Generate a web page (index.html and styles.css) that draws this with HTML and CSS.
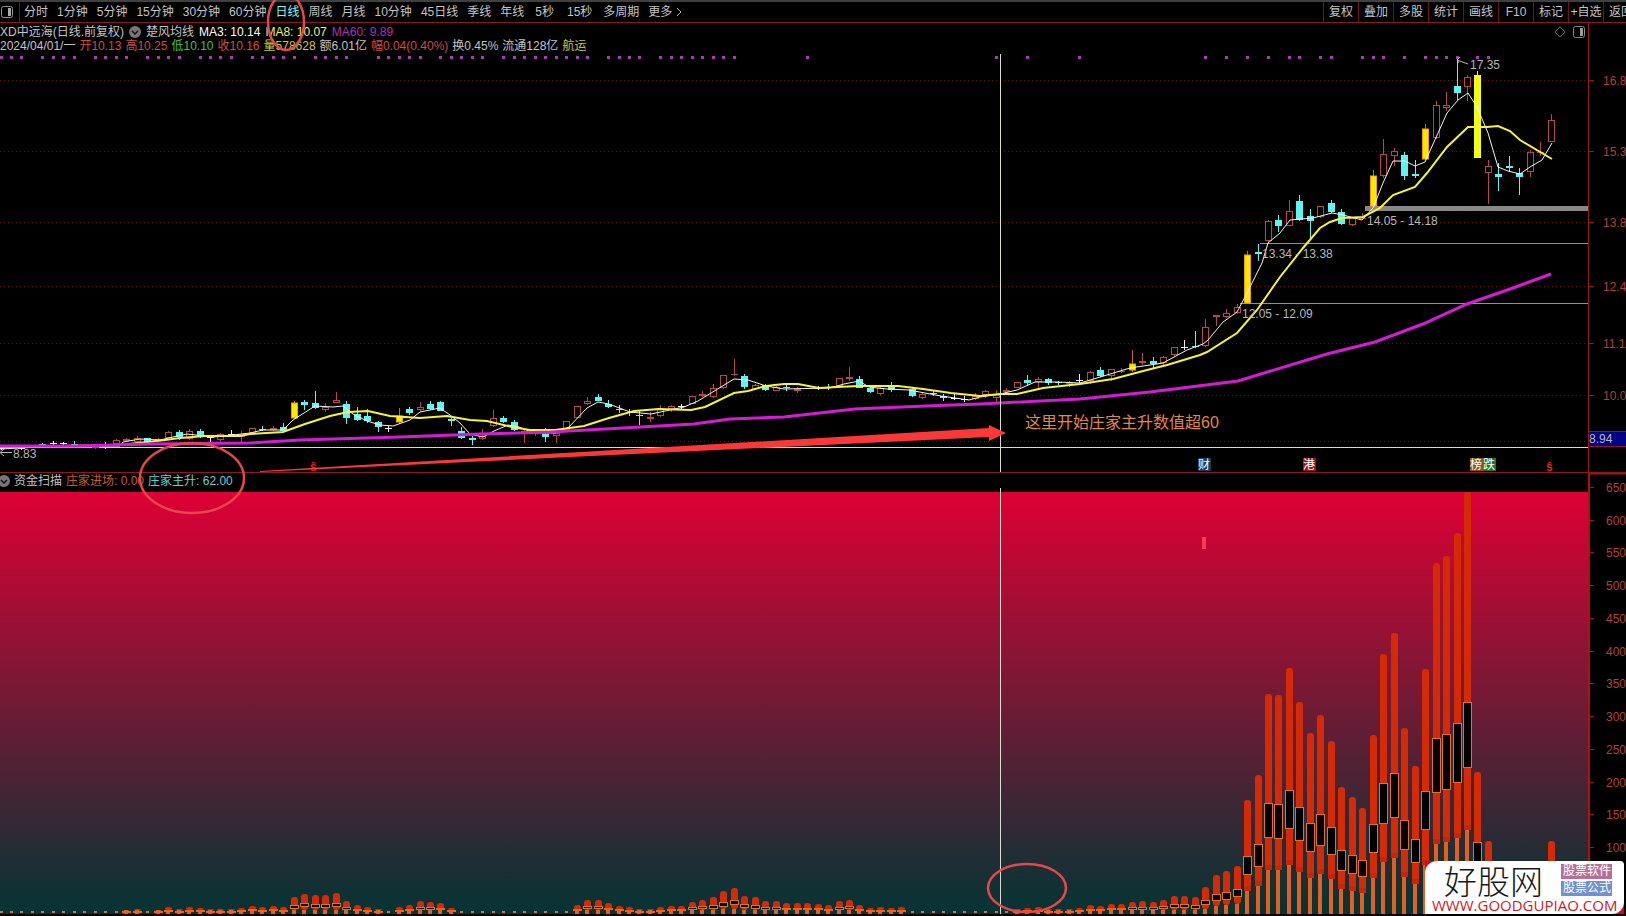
FILE: index.html
```html
<!DOCTYPE html>
<html lang="zh-CN">
<head>
<meta charset="utf-8">
<title>XD中远海 日线</title>
<link rel="stylesheet" href="styles.css">
</head>
<body>
<div class="terminal">
  <nav class="toolbar">
    <button class="panel-toggle" aria-label="侧栏">
      <svg width="12" height="12" viewBox="0 0 12 12"><rect x=".5" y=".5" width="11" height="11" rx="2" fill="none" stroke="#999"/><rect x="7" y="2" width="3" height="8" fill="#aaa"/></svg>
    </button>
    <div class="periods">
      <button>分时</button><button>1分钟</button><button>5分钟</button><button>15分钟</button><button>30分钟</button><button>60分钟</button><button class="active">日线</button><button>周线</button><button>月线</button><button>10分钟</button><button>45日线</button><button>季线</button><button>年线</button><button class="seconds">5秒</button><button class="seconds">15秒</button><button>多周期</button><button class="more">更多<svg width="6" height="10" viewBox="0 0 6 10"><path d="M1 1l4 4-4 4" fill="none" stroke="#bbb"/></svg></button>
    </div>
    <div class="tools">
      <button>复权</button><button>叠加</button><button>多股</button><button>统计</button><button>画线</button><button>F10</button><button>标记</button><button>+自选</button><button class="last">返回</button>
    </div>
  </nav>

  <section class="panel">
    <div class="plot">
      <header class="info">
        <div class="info-row first">
          <span>XD中远海(日线.前复权)</span>
          <svg class="chevron" width="12" height="12" viewBox="0 0 12 12"><circle cx="6" cy="6" r="6" fill="#777"/><path d="M3 5l3 3 3-3" fill="none" stroke="#111" stroke-width="1.5"/></svg>
          <span>楚风均线</span>
          <span class="ma3">MA3: 10.14</span>
          <span class="ma8">MA8: 10.07</span>
          <span class="ma60">MA60: 9.89</span>
          <span class="corner">
            <svg width="12" height="12" viewBox="0 0 12 12"><path d="M6 1l5 5-5 5-5-5z" fill="none" stroke="#777"/></svg>
            <svg width="12" height="12" viewBox="0 0 12 12"><rect x=".5" y=".5" width="11" height="11" rx="2" fill="none" stroke="#888"/><rect x="7" y="2" width="3" height="8" fill="#999"/></svg>
          </span>
        </div>
        <div class="info-row">
          <span>2024/04/01/一</span><span class="up">开10.13</span><span class="up">高10.25</span><span class="down">低10.10</span><span class="up">收10.16</span><span class="volume">量578628</span><span>额6.01亿</span><span class="up">幅0.04(0.40%)</span><span>换0.45%</span><span>流通128亿</span><span class="sector">航运</span>
        </div>
      </header>
      <svg id="price" class="chart" viewBox="0 53 1588 419"></svg>
    </div>
    <svg id="price-axis" class="axis" viewBox="1588 23 38 449"></svg>
  </section>

  <section class="panel sub">
    <div class="plot">
      <header class="sub-info">
        <svg class="half" width="10" height="12" viewBox="2 0 10 12"><circle cx="6" cy="6" r="6" fill="#777"/><path d="M3 5l3 3 3-3" fill="none" stroke="#111" stroke-width="1.5"/></svg>
        <span>资金扫描</span>
        <span class="entry">庄家进场: 0.00</span>
        <span class="rise">庄家主升: 62.00</span>
      </header>
      <svg id="flow" class="chart" viewBox="0 492 1588 422"></svg>
    </div>
    <svg id="flow-axis" class="axis" viewBox="1588 473 38 441"></svg>
  </section>

  <svg class="overlay" viewBox="0 0 1626 916" aria-hidden="true">
    <path d="M1000.5 54V472M1000.5 488V914" stroke="#d4dcd4" fill="none"/>
    <g fill="none" stroke="#e44848" stroke-width="2.5">
      <ellipse cx="286" cy="22" rx="18" ry="28"/>
      <ellipse cx="192" cy="478" rx="52" ry="35"/>
      <ellipse cx="1027" cy="888" rx="39" ry="24"/>
    </g>
    <path d="M260 471L989 428V425L1006 433 989 441V437L260 472z" fill="#fa3838"/>
    <text class="note" x="1025" y="428">这里开始庄家主升数值超60</text>
  </svg>

  <aside class="brand">
    <div class="brand-box">
      <div class="brand-top">
        <strong>好股网</strong>
        <div class="tags"><span class="tag-a">股票软件</span><span class="tag-b">股票公式</span></div>
      </div>
      <a href="#">WWW.GOODGUPIAO.COM</a>
    </div>
  </aside>
</div>
<script src="app.js"></script>
</body>
</html>
```
FILE: styles.css
```css
* { box-sizing: border-box; }
body {
  margin: 0;
  background: #000;
  color: #c4c4c4;
  font: 12px/14px "Liberation Sans", "Noto Sans CJK SC", sans-serif;
}
button {
  padding: 0;
  border: 0;
  background: none;
  color: inherit;
  font: inherit;
  white-space: nowrap;
}
.terminal { position: relative; overflow: hidden; padding-bottom: 2px; }
.toolbar {
  display: flex;
  height: 23px;
  border-top: 2px solid #404040;
  border-bottom: 1px solid #8c1820;
}
.panel-toggle {
  display: flex;
  align-items: center;
  width: 20px;
  padding-left: 1px;
  border-right: 1px solid #701418;
}
.periods { display: flex; flex: 1; gap: 9px; padding-left: 4px; }
.periods .active { color: #7ff; }
.periods .seconds { padding: 0 2px; }
.more { display: flex; align-items: center; gap: 4px; }
.tools { display: flex; }
.tools button { width: 35px; border-left: 1px solid #701418; }
.tools .last { width: 23px; padding-left: 5px; overflow: hidden; text-align: left; }

.panel { display: grid; grid-template-columns: minmax(0, 1fr) 38px; }
.sub { border-top: 1px solid #8c1820; }
.chart { display: block; width: 100%; height: auto; }
.axis { display: block; width: 100%; height: 100%; }
.info { height: 30px; padding-top: 2px; }
.info-row { display: flex; align-items: center; gap: 4px; height: 14px; white-space: nowrap; }
.first { gap: 5px; }
.corner { display: flex; gap: 7px; margin-left: auto; padding-right: 3px; }
.ma3 { color: #fff; }
.ma8 { color: #f0f070; }
.ma60 { color: #b030b0; }
.up { color: #cc4c48; }
.down { color: #40c040; }
.volume, .sector { color: #c8c850; }
.sub-info { display: flex; align-items: center; gap: 4px; height: 19px; padding-bottom: 3px; white-space: nowrap; }
.entry { color: #c85c38; }
.rise { color: #60d4d4; }

svg text { font: 12px "Liberation Sans", "Noto Sans CJK SC", sans-serif; fill: #b8b8b8; }
svg .tick { fill: #b04038; }
svg .badge { fill: #fff; }
svg .mark { fill: #e82020; font-weight: bold; }
svg .note { font-size: 16px; fill: #e08848; }
.overlay { position: absolute; left: 0; top: 0; width: 100%; pointer-events: none; }

.brand { position: absolute; right: 2px; bottom: 2px; background: #d01018; border-top-right-radius: 4px; }
.brand-box {
  padding: 2px 7px 0;
  border-radius: 12px 4px 12px 0;
  background: #fff;
  width: 199px;
  height: 53px;
}
.brand-top { display: flex; align-items: center; justify-content: space-between; height: 34px; padding: 0 5px 0 12px; }
.brand strong { color: #181818; font: 300 33px/34px "Noto Sans CJK SC", sans-serif; }
.tags { display: grid; gap: 2px; color: #fff; font-size: 12px; line-height: 15px; }
.tags span { padding: 0 1px 0 2px; }
.tag-a { background: #b87098; }
.tag-b { background: #7090d0; }
.brand a { display: block; color: #d01820; font: 15px/16px "Open Sans", sans-serif; text-decoration: none; }
```
FILE: app.js
```js
const STEP = 10.475;
const xAt = i => Math.floor(1 + STEP * i);
const rect = (x, y, w, h, attrs) => `<rect x="${x}" y="${y}" width="${w}" height="${h}" ${attrs}/>`;
const text = (x, y, s, cls = '') => `<text x="${x}" y="${y}" class="${cls}">${s}</text>`;

// index, kind, high, body top, body bottom, low
const candles = `0w448,448,449,450 2w446,448,449,450 4c443,444,446,447 5w441,443,444,445 6w442,443,444,446 7c441,444,446,448 9r445,446,448,449
10w442,447,448,449 11r439,440,444,445 12r438,439,441,441 13r436,438,442,442 14c438,438,442,443 15r438,439,441,442 16r431,432,438,438
17c430,432,437,440 18r429,431,439,440 19c429,431,436,438 20w436,437,438,442 21r433,434,440,442 22w430,434,435,436 23r431,434,437,442
24r428,428,433,433 25c426,429,430,431 26r426,428,430,431 27c423,427,431,431 28y401,403,418,419 29c400,402,405,410 30c391,403,408,409
31r403,407,410,412 32r392,400,403,403 33c401,404,418,424 34c407,414,420,421 35c409,416,421,423 36c421,422,427,432 37w426,428,429,432
38y408,416,422,424 39c407,409,413,415 40r402,407,410,411 41c401,404,409,410 42c401,402,411,411 43c418,419,421,426 44c427,431,438,439
45c436,438,440,445 46r429,436,439,440 47r410,418,426,427 48c416,418,422,423 49c420,422,430,431 50r430,431,432,443 51r430,432,433,436
52c428,434,437,442 53r431,433,436,443 54r421,421,430,431 55r406,406,418,418 56r397,401,404,405 57c394,397,401,401 58c400,404,407,408
59c405,409,410,413 60c409,412,413,416 61c411,415,416,425 62r412,417,419,422 63r405,408,416,417 64r405,406,409,412 65w404,406,407,409
66r396,396,404,404 67r391,394,396,397 68r384,388,397,398 69r375,375,388,389 70r359,374,375,376 71c374,376,387,389 72r384,385,389,390
73c384,385,390,391 74r386,387,391,391 75c385,387,388,391 76r387,389,391,393 78w386,388,389,390 79c384,387,388,390 80r378,378,386,386
81r367,377,379,381 82c376,379,388,388 83c387,388,392,393 84r387,388,394,395 85c382,387,390,392 87c388,389,396,397 88r392,394,398,399
89c391,393,394,396 90c394,396,398,401 91w394,398,399,400 92w396,399,400,402 93r393,396,399,400 94r390,391,395,398 95r390,395,398,402
96r388,390,392,393 97r382,382,388,388 98c375,380,383,385 99r377,379,382,388 100c378,379,383,385 101c381,382,383,385 102r381,383,384,387
103w374,380,381,383 104r371,372,381,384 105c367,370,376,377 106r369,369,376,381 107r368,371,372,373 108y350,364,370,372
109r353,361,363,365 110c357,361,364,368 111r356,357,363,365 112r347,347,355,356 113w340,347,348,350 114c331,346,347,348
115r319,327,346,347 116r315,315,317,326 117r309,313,317,318 118r304,307,313,314 119y251,255,303,303 120c244,252,254,261
121r220,221,241,243 122c215,220,226,232 123r200,211,226,226 124c195,201,220,221 125c209,216,221,240 126r206,206,217,218
127c200,203,212,213 128c209,212,224,225 129r217,218,225,226 130r213,218,219,220 131y170,176,206,206 132r139,154,176,178
133r148,151,156,166 134c152,155,176,180 135c160,174,176,178 136y124,129,159,160 137r101,105,138,139 138r92,105,108,111
139c60,86,93,100 140r75,77,87,101 141l71,75,158,158 142r160,166,173,204 143c163,174,177,191 144c156,166,168,172 145c168,173,177,195
146r150,152,172,177 147r142,152,153,156 148r114,120,142,142`.split(/\s+/);

const ma3 = '0,449 60,446 120,446 123,442 140,439 160,440 173,437 187,434 213,437 233,435 250,433 263,430 283,430 293,420 315,406 333,407 343,406 353,414 367,421 380,425 393,426 410,420 420,412 440,408 450,415 460,423 470,434 483,437 494,431 508,425 519,427 534,433 555,433 569,427 587,408 598,402 609,404 630,412 651,414 684,407 698,401 716,390 734,379 748,380 766,386 784,389 830,388 844,384 859,381 869,387 887,389 909,390 941,396 969,400 980,397 1000,394 1017,390 1035,382 1057,382 1080,383 1097,378 1130,368 1163,363 1187,350 1203,344 1208,340 1223,322 1237,312 1245,297 1252,283 1262,263 1268,243 1280,233 1290,220 1313,218 1332,213 1343,215 1362,220 1373,208 1383,183 1393,161 1405,161 1415,166 1425,162 1447,113 1458,100 1468,93 1477,107 1488,133 1498,167 1508,171 1520,174 1530,167 1542,160 1552,143';
const ma8 = '0,447 120,445 165,440 180,438 205,436 240,436 250,434 283,432 305,424 330,416 348,412 368,411 390,416 420,418 447,416 470,420 487,421 512,427 530,430 555,430 584,426 609,418 634,411 659,409 691,410 705,407 734,393 748,391 766,386 784,384 798,384 819,388 837,387 859,386 898,386 923,389 951,393 980,396 1000,394 1017,394 1043,388 1080,384 1113,379 1147,370 1167,365 1200,355 1207,352 1237,333 1257,310 1280,277 1303,248 1320,228 1330,222 1342,218 1363,217 1380,208 1393,195 1415,187 1427,173 1447,147 1468,127 1487,127 1498,126 1510,131 1520,140 1552,159';
const ma60 = '0,446 78,446 150,444 250,443 300,440 400,437 480,434 551,432 623,428 694,424 730,419 784,417 855,409 926,406 980,404 1080,399 1150,392 1238,381 1327,354 1375,342 1423,324 1467,304 1513,288 1551,274';

const gridY = [80, 151, 222, 286, 343, 395, 441];
const signalDots = [0,1,2,4,5,6,7,9,10,11,12,14,15,16,17,19,20,21,22,24,25,26,27,28,30,31,32,33,36,37,38,39,40,42,43,44,45,46,48,49,50,51,52,53,54,55,56,58,59,60,61,63,64,65,66,67,68,69,70,77,95,98,103,115,117,119,121,123,124,126,127,130,131,132,134,136,137,138,139,141,142];

let out = gridY.map(y => `<path d="M0 ${y}.5H1588" stroke="#601410" stroke-dasharray="1 3"/>`).join('');
out += signalDots.map(i => rect(xAt(i) - 1, 56, 3, 3, 'fill="#a83cb0"')).join('');
out += '<path d="M0 447.5H1588" stroke="#d8d8d8"/><path d="M1260 243.5H1588M1240 303.5H1588" stroke="#909090"/>';
out += rect(1365, 206, 223, 5, 'fill="#888"');

const ink = { r: '#b84844', c: '#5ef4f4', w: '#f0f0f0', y: '#ffdc00', l: '#f4ff10' };
for (const c of candles) {
  const [, n, kind, rest] = c.match(/^(\d+)([a-z])(.*)$/);
  const [hi, top, bottom, lo] = rest.split(',').map(Number);
  const x = xAt(+n), color = ink[kind];
  out += `<path d="M${x + .5} ${hi}V${top}M${x + .5} ${bottom}V${lo}" stroke="${kind === 'y' ? '#c87010' : color}"/>`;
  if (kind === 'r' && bottom - top > 1) out += rect(x - 2.5, top + .5, 6, Math.max(1, bottom - top - 1), `fill="#000" stroke="${color}"`);
  else if (kind === 'y') out += rect(x - 2.5, top, 6, bottom - top, 'fill="#ffe800" stroke="#f0a000"');
  else out += rect(x - 3, top, 7, Math.max(1, bottom - top), `fill="${color}"`);
}
out += `<polyline points="${ma3}" fill="none" stroke="#f4f4f4"/>`;
out += `<polyline points="${ma8}" fill="none" stroke="#f4f43c" stroke-width="2"/>`;
out += `<polyline points="${ma60}" fill="none" stroke="#d41cd4" stroke-width="3"/>`;
out += text(1470, 69, '17.35') + '<path d="M1468 64L1457 60M1460 57L1457 60 1459 63" fill="none" stroke="#bbb"/>';
out += text(13, 458, '8.83') + '<path d="M12 452.5H1M4 449L0 452.5 4 456" fill="none" stroke="#bbb"/>';
out += text(1367, 225, '14.05 - 14.18') + text(1262, 258, '13.34 - 13.38') + text(1242, 318, '12.05 - 12.09');
const badges = [[1198, '财', '#143c60'], [1303, '港', '#901818'], [1470, '榜', '#88561c'], [1483, '跌', '#1c7824']];
out += badges.map(([x, s, bg]) => rect(x, 458, 13, 13, `fill="${bg}"`) + text(x, 469, s, 'badge')).join('');
out += text(1546, 471, 'ŝ', 'mark') + text(310, 471, 'ŝ', 'mark');
document.getElementById('price').innerHTML = out;

let axis = '<path d="M1588.5 23V472" stroke="#981818"/>';
['16.8', '15.3', '13.8', '12.4', '11.1', '10.0'].forEach((s, i) => {
  axis += `<path d="M1589 ${gridY[i]}.5h5" stroke="#981818"/>` + text(1603, gridY[i] + 5, s, 'tick');
});
axis += rect(1588.5, 431.5, 40, 15, 'fill="#000088" stroke="#981818"') + text(1589, 443, '8.94');
document.getElementById('price-axis').innerHTML = axis;

// Bar heights of the fund flow histogram; bars not listed are flat
const heights = Array(149).fill(2);
const put = (start, values) => values.forEach((v, k) => { heights[start + k] = v; });
put(12, [4,5,2,4,7,5,7,6,5,5,5,6,8,7,8,7,17,20,19,19,21,13,9,7,5,2,7,9,13,12,11,6]);
put(55, [9,14,14,11,8,7,5,5,7,8,8,12,14,17,23,26,18,17,13,13,11,11,11,10,9,13,14,9,6,7,6,7]);
put(97, [5,6,7,5,5,5,6,9,8,10,10,12,13,12,14,18,18,17,27,39,43,48,114,139,220,219,246,212,181,199,173,127,117,106,179,260,281,186,148,245,351,358,381,422,142,73]);
heights[148] = 73;

let bars = '<defs><linearGradient id="heat" x1="0" y1="0" x2="0" y2="1"><stop offset="0" stop-color="#de0034"/><stop offset="1" stop-color="#043434"/></linearGradient></defs>';
bars += rect(0, 492, 1588, 422, 'fill="url(#heat)"') + rect(1202, 537, 4, 12, 'fill="#f43c50"');
heights.forEach((h, i) => {
  const x = xAt(i), base = 914;
  if (h < 3) { bars += rect(x - 1, base - 3, 3, 2, 'fill="#c87838"'); return; }
  const stem = Math.max(4, Math.round(h * .2));
  bars += rect(x - 3, base - h, 7, Math.max(2, h - stem), 'rx="3" fill="#d42a06"');
  if (h > 60) bars += rect(x - 3, base - stem - 5, 7, 5, 'fill="#c82406"');
  bars += rect(x - 2, base - stem, 4, stem, 'fill="#e06020"');
  const top = Math.round(base - h / 2), bh = Math.round(h * .155);
  if (h > 11) bars += rect(x - 3.5, top - .5, 8, Math.max(2, bh), 'fill="#000" stroke="#e07030"');
  else bars += rect(x - 4, top - 1, 9, 2, 'fill="#f86010"');
});
document.getElementById('flow').innerHTML = bars;

let scale = '<path d="M1589 473V914M1588 473.5H1626" stroke="#b01010" stroke-width="2"/>';
for (let v = 650; v >= 100; v -= 50) {
  const y = Math.round(487 + (650 - v) * .6545);
  scale += `<path d="M1590 ${y}.5h4" stroke="#981818"/>` + text(1606, y + 5, v, 'tick');
}
document.getElementById('flow-axis').innerHTML = scale;
```
